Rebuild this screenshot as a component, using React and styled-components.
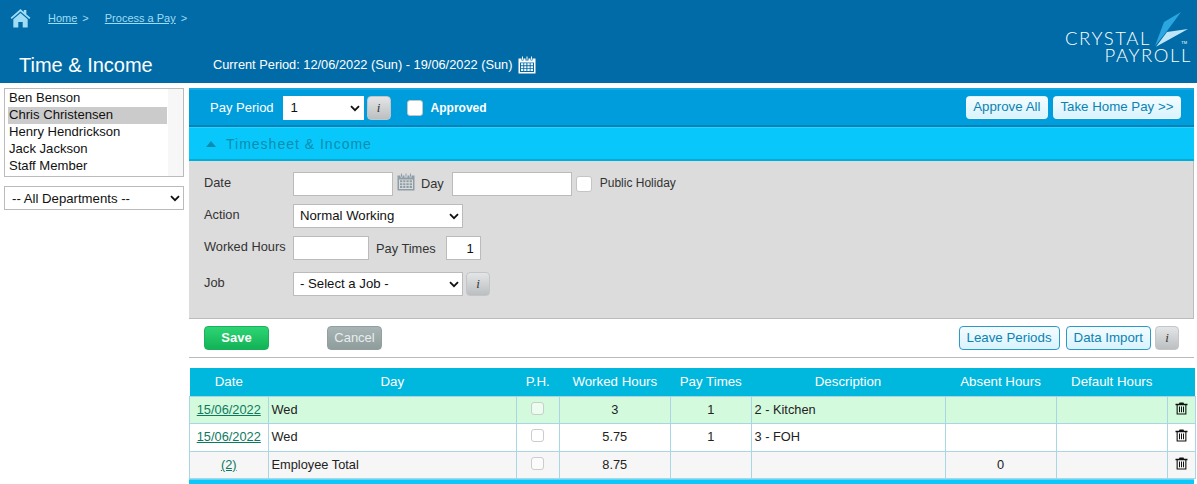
import React from 'react'
import styled, { createGlobalStyle } from 'styled-components'

const GlobalStyle = createGlobalStyle`
html, body {
  margin: 0;
  padding: 0;
  background: #fff;
  font-family: "Liberation Sans", Arial, sans-serif;
  font-size: 12px;
  color: #222;
}
* { box-sizing: border-box; }
`

const HomeIcon = () => (
  <svg width="21" height="20" viewBox="0 0 19 20" preserveAspectRatio="none">
    <path fill="#9fdcf6" d="M9.500 1 L0.500 9.800 L1.600 11 L9.500 3.400 L17.400 11 L18.500 9.800 L14.800 6.200 V2 H12.500 V4 Z" />
    <path fill="#9fdcf6" d="M9.500 5 L3 11.200 V19.500 H7.500 V14 H11.500 V19.500 H16 V11.200 Z" />
  </svg>
)

const CalendarIcon = ({ color }) => (
  <svg width="18" height="18" viewBox="0 0 18 18">
    <path fill={color} fillRule="evenodd" d="M0.500 2.500 H3.500 V4.500 H5.500 V2.500 H7.500 V4.500 H10.500 V2.500 H12.500 V4.500 H14.500 V2.500 H17.500 V17.500 H0.500 Z M2 6.500 V16 H16 V6.500 Z" />
    <path fill={color} d="M4 0.500 H5 V3.800 H4 Z M8.500 0.500 H9.500 V3.800 H8.500 Z M13 0.500 H14 V3.800 H13 Z" />
    <path fill={color} d="M3 7.300 H5.300 V9.300 H3 Z M6.200 7.300 H8.400 V9.300 H6.200 Z M9.400 7.300 H11.700 V9.300 H9.400 Z M12.600 7.300 H15 V9.300 H12.600 Z M3 10.200 H5.300 V12.200 H3 Z M6.200 10.200 H8.400 V12.200 H6.200 Z M9.400 10.200 H11.700 V12.200 H9.400 Z M12.600 10.200 H15 V12.200 H12.600 Z M3 13.100 H5.300 V15.100 H3 Z M6.200 13.100 H8.400 V15.100 H6.200 Z M9.400 13.100 H11.700 V15.100 H9.400 Z M12.600 13.100 H15 V15.100 H12.600 Z" />
  </svg>
)

const TrashIcon = () => (
  <svg width="13" height="13" viewBox="0 0 13 13">
    <path fill="#111" fillRule="evenodd" d="M0.500 1.800 H4 L4.500 0.500 H8.500 L9 1.800 H12.500 V3.200 H11.400 V12.500 H1.600 V3.200 H0.500 Z M2.700 3.200 V11.400 H10.300 V3.200 Z" />
    <path fill="#111" d="M4 4.500 H5 V10.200 H4 Z M6 4.500 H7 V10.200 H6 Z M8 4.500 H9 V10.200 H8 Z" />
  </svg>
)

const Chevron = () => (
  <svg width="10" height="7" viewBox="0 0 10 7">
    <path d="M1 1.200 L5 5.200 L9 1.200" fill="none" stroke="#111" strokeWidth="1.800" />
  </svg>
)

const Header = styled.header`
  height: 83px;
  background: #006ba6;
  color: #fff;
  display: flex;
  justify-content: space-between;
  padding: 8px 5px 0 10px;
`

const HeaderLeft = styled.div`
  display: flex;
  flex-direction: column;
`

const CrumbList = styled.div`
  display: flex;
  gap: 17px;
`

const Crumbs = styled.nav`
  display: flex;
  align-items: center;
  height: 20px;
  gap: 16px;
  font-size: 11px;
  color: #9fdcf6;
`

const Crumb = styled.span`
  display: flex;
  gap: 5px;
  a {
    color: #9fdcf6;
    text-decoration: underline;
  }
`

const TitleRow = styled.div`
  display: flex;
  align-items: center;
  margin-top: 26px;
  padding-left: 9px;
`

const Title = styled.h1`
  margin: 0;
  width: 194px;
  font-size: 20px;
  font-weight: 400;
  color: #fff;
`

const Period = styled.div`
  display: flex;
  align-items: center;
  gap: 5px;
  padding-bottom: 2px;
  font-size: 12.800px;
`

const Logo = styled.div`
  position: relative;
  width: 127px;
  height: 40px;
  margin-top: 22px;
  font-family: "Lato", sans-serif;
  font-weight: 300;
  font-size: 18.500px;
  line-height: 17px;
  letter-spacing: 1.600px;
  color: #fff;
`

const LogoLine = styled.div`
  width: fit-content;
  margin-left: ${(p) => (p.$right ? 'auto' : 0)};
`

const LogoMark = styled.svg`
  position: absolute;
  left: 88px;
  top: -20px;
`

const TradeMark = styled.span`
  position: absolute;
  right: 5px;
  top: 11px;
  font-family: "Liberation Sans", sans-serif;
  font-size: 4px;
  line-height: 4px;
  letter-spacing: 0;
`

const Body = styled.div`
  display: flex;
  align-items: flex-start;
  padding: 5px 3px 0 4px;
  gap: 5px;
`

const Sidebar = styled.aside`
  width: 180px;
  flex: none;
  display: flex;
  flex-direction: column;
  gap: 9px;
`

const StaffList = styled.div`
  height: 89px;
  border: 1px solid #bbb;
  background: linear-gradient(to right, #fff 163px, #f7f7f7 163px);
  padding: 1px 0 0 3px;
  font-size: 13.100px;
`

const StaffItem = styled.div`
  width: 159px;
  height: 17px;
  line-height: 15px;
  padding-left: 1px;
  color: #111;
  background: ${(p) => (p.$active ? '#cbcbcb' : 'transparent')};
`

const SelectWrap = styled.div`
  position: relative;
  width: ${(p) => p.$width}px;
  height: 24px;
  flex: none;
  svg {
    position: absolute;
    right: 4px;
    top: 50%;
    margin-top: -3px;
    pointer-events: none;
  }
`

const SelectBox = styled.select`
  appearance: none;
  width: 100%;
  height: 100%;
  border: 1px solid ${(p) => (p.$plain ? 'transparent' : '#bbb')};
  border-radius: 0;
  background: #fff;
  padding: ${(p) => (p.$wide ? '0 0 0 7px' : '0 0 1px 6px')};
  font-family: inherit;
  font-size: 13.200px;
  color: #111;
`

const Main = styled.main`
  flex: 1;
  min-width: 0;
`

const PayBar = styled.div`
  height: 39px;
  background: #009ddc;
  border-top: 2px solid #19a9e2;
  border-bottom: 2px solid #0083b8;
  display: flex;
  align-items: center;
  padding: 0 13px 0 21px;
  color: #fff;
  font-size: 13px;
`

const PayLabel = styled.span`
  margin-right: 9px;
`

const Approved = styled.span`
  font-size: 12px;
  font-weight: 700;
  margin-left: 8px;
`

const Spacer = styled.div`
  flex: 1;
`

const InfoButton = styled.button`
  width: 24px;
  height: 24px;
  flex: none;
  margin-left: ${(p) => p.$gap || 3}px;
  border: 1px solid #c2c6c8;
  border-radius: 4px;
  background: linear-gradient(#e3e5e6, #bcbfc1);
  padding: 0;
  font-family: "Liberation Serif", serif;
  font-style: italic;
  font-size: 13px;
  color: #333;
`

const Check = styled.span`
  display: block;
  flex: none;
  width: ${(p) => p.$size || 16}px;
  height: ${(p) => p.$size || 16}px;
  margin: 0 ${(p) => (p.$center ? 'auto' : 0)} ${(p) => p.$up || 0}px ${(p) => (p.$center ? 'auto' : `${p.$gap || 0}px`)};
  background: ${(p) => (p.$muted ? 'rgba(255,255,255,.5)' : '#fff')};
  border: 1px solid ${(p) => (p.$muted ? '#ccc' : '#c4c4c4')};
  border-radius: 3px;
`

const PillButton = styled.button`
  height: ${(p) => (p.$outlined ? 24 : 23)}px;
  margin-left: ${(p) => (p.$outlined ? 6 : 5)}px;
  padding: 0 ${(p) => (p.$outlined ? 7 : 6.500)}px 1px;
  border: 1px solid ${(p) => (p.$outlined ? '#2a9ac8' : 'transparent')};
  border-radius: 4px;
  background: linear-gradient(#f4fcff, #d9f3fd);
  font-family: inherit;
  font-size: 13.300px;
  color: #0b83b3;
  line-height: 1;
`

const SectionBar = styled.div`
  height: 34px;
  background: #08c8fb;
  border-top: 1px solid #2ed0fb;
  border-bottom: 2px solid #00aed6;
  display: flex;
  align-items: center;
  padding-left: 17px;
  gap: 10px;
  font-size: 14px;
  letter-spacing: 1px;
  color: #0a8db0;
  svg { flex: none; }
`

const Form = styled.div`
  height: 158px;
  background: #dcdcdc;
  border-right: 1px solid #bbb;
  border-bottom: 1px solid #bbb;
  padding: 11px 0 0 15px;
  display: flex;
  flex-direction: column;
`

const FormRow = styled.div`
  display: flex;
  align-items: center;
  height: 24px;
  margin-bottom: ${(p) => p.$after || 0}px;
`

const Label = styled.label`
  width: 89px;
  flex: none;
  font-size: 12.800px;
  color: #333;
  padding-bottom: ${(p) => p.$lift || 0}px;
`

const InlineLabel = styled.span`
  font-size: 12.800px;
  color: #333;
  margin: ${(p) => p.$margin};
  padding: ${(p) => p.$pad || 0};
`

const Input = styled.input`
  width: ${(p) => p.$width}px;
  height: 24px;
  flex: none;
  border: 1px solid #bbb;
  border-radius: 0;
  background: #fff;
  padding: 0 6px;
  font-family: inherit;
  font-size: 13px;
  color: #111;
  text-align: ${(p) => p.$align || 'left'};
`

const CalSlot = styled.span`
  display: flex;
  margin-left: 4px;
  padding-bottom: 4px;
`

const HolidayLabel = styled.span`
  font-size: 12px;
  color: #333;
  margin-left: 8px;
  padding-bottom: 2px;
`

const ActionBar = styled.div`
  height: 39px;
  border-bottom: 1px solid #bbb;
  display: flex;
  align-items: center;
  padding: 0 15px 0 15px;
`

const SolidButton = styled.button`
  height: 24px;
  width: ${(p) => p.$width}px;
  margin-right: ${(p) => p.$after || 0}px;
  border: 1px solid ${(p) => (p.$save ? '#1bb05c' : '#93a0a0')};
  border-radius: 4px;
  background: ${(p) => (p.$save ? 'linear-gradient(#2ed573, #12b256)' : 'linear-gradient(#a9b5b5, #8f9c9c)')};
  padding: 0 0 2px;
  font-family: inherit;
  font-size: 13px;
  font-weight: ${(p) => (p.$save ? 700 : 400)};
  color: ${(p) => (p.$save ? '#fff' : '#e8eded')};
`

const Table = styled.table`
  width: 100%;
  margin-top: 10px;
  table-layout: fixed;
  border-collapse: collapse;
  font-size: 13px;
`

const Th = styled.th`
  height: 28px;
  background: #00b7de;
  color: #fff;
  font-weight: 400;
  font-size: 13.300px;
  padding: 0;
  text-align: center;
`

const Tr = styled.tr`
  background: ${(p) => p.$bg};
`

const Td = styled.td`
  height: ${(p) => p.$h}px;
  border: 1px solid #a9d6e4;
  padding: 0 ${(p) => (p.$left ? 3 : 0)}px ${(p) => p.$lift || 0}px;
  text-align: ${(p) => (p.$left ? 'left' : 'center')};
  color: #222;
  font-size: 12.800px;
  a {
    color: #0d7a5f;
    text-decoration: underline;
  }
  svg {
    display: block;
    margin: 0 auto;
  }
`

const TableFoot = styled.div`
  height: 6px;
  background: #0bc8fb;
  border-top: 1px solid #5fd8f5;
`

const columns = [
  ['Date', 78.500],
  ['Day', 248.500],
  ['P.H.', 42.500],
  ['Worked Hours', 111.500],
  ['Pay Times', 80.500],
  ['Description', 194],
  ['Absent Hours', 111],
  ['Default Hours', 111.500],
  ['', 27.500],
]

const rows = [
  { date: '15/06/2022', day: 'Wed', worked: '3', times: '1', desc: '2 - Kitchen', absent: '', bg: '#d4fadd', h: 27, lift: 0 },
  { date: '15/06/2022', day: 'Wed', worked: '5.75', times: '1', desc: '3 - FOH', absent: '', bg: '#fff', h: 28, lift: 2 },
  { date: '(2)', day: 'Employee Total', worked: '8.75', times: '', desc: '', absent: '0', bg: '#f6f6f6', h: 27, lift: 0 },
]

const staff = ['Ben Benson', 'Chris Christensen', 'Henry Hendrickson', 'Jack Jackson', 'Staff Member']

const Select = ({ width, plain, wide, value }) => (
  <SelectWrap $width={width}>
    <SelectBox $plain={plain} $wide={wide} defaultValue={value}>
      <option>{value}</option>
    </SelectBox>
    <Chevron />
  </SelectWrap>
)

const App = () => {
  return (
    <>
      <GlobalStyle />
      <Header>
        <HeaderLeft>
          <CrumbList>
            <HomeIcon />
            <Crumbs>
              <Crumb><a href="#home">Home</a> &gt;</Crumb>
              <Crumb><a href="#pay">Process a Pay</a> &gt;</Crumb>
            </Crumbs>
          </CrumbList>
          <TitleRow>
            <Title>Time &amp; Income</Title>
            <Period>
              Current Period: 12/06/2022 (Sun) - 19/06/2022 (Sun)
              <CalendarIcon color="#fff" />
            </Period>
          </TitleRow>
        </HeaderLeft>
        <Logo>
          <LogoLine>CRYSTAL</LogoLine>
          <LogoLine $right>PAYROLL</LogoLine>
          <LogoMark width="40" height="40" viewBox="0 0 40 40">
            <path fill="#2aa7e0" d="M28 2 L11 12 L2 36 L14 21 Z" />
            <path fill="#bfe6f8" d="M35 19 L14 22 L3 36.700 Z" />
          </LogoMark>
          <TradeMark>TM</TradeMark>
        </Logo>
      </Header>
      <Body>
        <Sidebar>
          <StaffList>
            {staff.map((name) => (
              <StaffItem key={name} $active={name === 'Chris Christensen'}>{name}</StaffItem>
            ))}
          </StaffList>
          <Select width={180} wide value="-- All Departments --" />
        </Sidebar>
        <Main>
          <PayBar>
            <PayLabel>Pay Period</PayLabel>
            <Select width={81} plain wide value="1" />
            <InfoButton>i</InfoButton>
            <Check $gap={16} />
            <Approved>Approved</Approved>
            <Spacer />
            <PillButton>Approve All</PillButton>
            <PillButton>Take Home Pay &gt;&gt;</PillButton>
          </PayBar>
          <SectionBar>
            <svg width="10" height="6" viewBox="0 0 10 6"><path fill="#0a8db0" d="M5 0 L10 6 H0 Z" /></svg>
            Timesheet &amp; Income
          </SectionBar>
          <Form>
            <FormRow $after={8}>
              <Label $lift={4}>Date</Label>
              <Input $width={100} />
              <CalSlot><CalendarIcon color="#8e9ea6" /></CalSlot>
              <InlineLabel $margin="0 8px 0 6px" $pad="0 0 2px">Day</InlineLabel>
              <Input $width={120} />
              <Check $gap={4} $up={1} />
              <HolidayLabel>Public Holiday</HolidayLabel>
            </FormRow>
            <FormRow $after={8}>
              <Label $lift={4}>Action</Label>
              <Select width={170} value="Normal Working" />
            </FormRow>
            <FormRow $after={12}>
              <Label $lift={4}>Worked Hours</Label>
              <Input $width={76} />
              <InlineLabel $margin="0 10px 0 7px">Pay Times</InlineLabel>
              <Input $width={35} $align="right" defaultValue="1" />
            </FormRow>
            <FormRow>
              <Label $lift={4}>Job</Label>
              <Select width={170} value="- Select a Job -" />
              <InfoButton>i</InfoButton>
            </FormRow>
          </Form>
          <ActionBar>
            <SolidButton $save $width={65} $after={58}>Save</SolidButton>
            <SolidButton $width={55}>Cancel</SolidButton>
            <Spacer />
            <PillButton $outlined>Leave Periods</PillButton>
            <PillButton $outlined>Data Import</PillButton>
            <InfoButton $gap={4}>i</InfoButton>
          </ActionBar>
          <Table>
            <colgroup>
              {columns.map(([name, w], i) => <col key={i} style={{ width: w }} />)}
            </colgroup>
            <thead>
              <tr>{columns.map(([name], i) => <Th key={i}>{name}</Th>)}</tr>
            </thead>
            <tbody>
              {rows.map((row, i) => (
                <Tr key={i} $bg={row.bg}>
                  <Td $h={row.h} $lift={row.lift}><a href="#row">{row.date}</a></Td>
                  <Td $h={row.h} $lift={row.lift} $left>{row.day}</Td>
                  <Td $h={row.h} $lift={3}><Check $size={13} $muted $center /></Td>
                  <Td $h={row.h} $lift={row.lift}>{row.worked}</Td>
                  <Td $h={row.h} $lift={row.lift}>{row.times}</Td>
                  <Td $h={row.h} $lift={row.lift} $left>{row.desc}</Td>
                  <Td $h={row.h} $lift={row.lift}>{row.absent}</Td>
                  <Td $h={row.h}></Td>
                  <Td $h={row.h} $lift={3}><TrashIcon /></Td>
                </Tr>
              ))}
            </tbody>
          </Table>
          <TableFoot />
        </Main>
      </Body>
    </>
  )
}

export default App
